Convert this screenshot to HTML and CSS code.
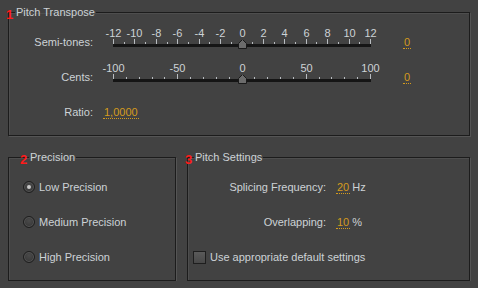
FILE: index.html
```html
<!DOCTYPE html>
<html>
<head>
    <title>Pitch Shifter</title>
    <link rel="stylesheet" href="styles.css">
    <script>
    window.onload = function() {
        var ns = "http://www.w3.org/2000/svg";
        var sliders = document.querySelectorAll(".slider");
        sliders.forEach(function(svg) {
            var min = Number(svg.dataset.min);
            var max = Number(svg.dataset.max);
            var step = Number(svg.dataset.step);
            var every = Number(svg.dataset.label);
            var value = Number(svg.dataset.value);
            var left = 13, len = 257;
            var count = (max - min) / step;

            var track = document.createElementNS(ns, "rect");
            track.setAttribute("x", left);
            track.setAttribute("y", 16);
            track.setAttribute("width", len + 1);
            track.setAttribute("height", 3);
            track.setAttribute("class", "track");
            svg.appendChild(track);

            for (var i = 0; i <= count; i++) {
                var x = Math.round(left + i * len / count);
                var major = i % every == 0;
                var tick = document.createElementNS(ns, "rect");
                tick.setAttribute("x", x);
                tick.setAttribute("y", major ? 11 : 14);
                tick.setAttribute("width", 1);
                tick.setAttribute("height", major ? 5 : 2);
                tick.setAttribute("class", "tick");
                svg.appendChild(tick);
                if (major) {
                    var t = document.createElementNS(ns, "text");
                    t.setAttribute("x", x + 0.5);
                    t.setAttribute("y", 9);
                    t.setAttribute("class", "tick-label");
                    t.textContent = min + i * step;
                    svg.appendChild(t);
                }
            }

            // thumb, pointing up
            var cx = Math.round(left + (value - min) / (max - min) * len) + 0.5;
            var thumb = document.createElementNS(ns, "polygon");
            thumb.setAttribute("points",
                (cx - 4) + ",20.5 " + (cx - 4) + ",15.5 " + cx + ",11.5 " +
                (cx + 4) + ",15.5 " + (cx + 4) + ",20.5");
            thumb.setAttribute("class", "thumb");
            svg.appendChild(thumb);
        });
    };
    </script>
</head>
<body>
<div class="panel">
    <fieldset class="group transpose">
        <legend><span class="num">1</span>Pitch Transpose</legend>
        <div class="slider-row">
            <span class="row-label">Semi-tones:</span>
            <svg class="slider" width="280" height="24" data-min="-12" data-max="12" data-step="1" data-label="2" data-value="0"></svg>
            <span class="value slider-value">0</span>
        </div>
        <div class="slider-row">
            <span class="row-label">Cents:</span>
            <svg class="slider" width="280" height="24" data-min="-100" data-max="100" data-step="10" data-label="5" data-value="0"></svg>
            <span class="value slider-value">0</span>
        </div>
        <div class="ratio-row">
            <span class="row-label">Ratio:</span>
            <span class="value ratio-value">1,0000</span>
        </div>
    </fieldset>

    <div class="bottom">
        <fieldset class="group precision">
            <legend><span class="num">2</span>Precision</legend>
            <div class="radio-row"><span class="radio checked"></span>Low Precision</div>
            <div class="radio-row"><span class="radio"></span>Medium Precision</div>
            <div class="radio-row"><span class="radio"></span>High Precision</div>
        </fieldset>

        <fieldset class="group settings">
            <legend><span class="num">3</span>Pitch Settings</legend>
            <div class="field-row">
                <span class="field-label">Splicing Frequency:</span>
                <span class="value">20</span>
                <span class="unit">Hz</span>
            </div>
            <div class="field-row">
                <span class="field-label">Overlapping:</span>
                <span class="value">10</span>
                <span class="unit">%</span>
            </div>
            <div class="check-row"><span class="checkbox"></span>Use appropriate default settings</div>
        </fieldset>
    </div>
</div>
</body>
</html>
```

FILE: styles.css
```css
body {
    margin: 0;
    background: #424242;
    font-family: "Liberation Sans", Arial, sans-serif;
    font-size: 11px;
    color: #cdd2d6;
}
.panel {
    padding: 5px 0 0 8px;
    width: 462px;
}
.group {
    margin: 0;
    padding: 0;
    border: 1px solid #1c1c1c;
    box-shadow: inset 1px 1px 0 #4e4e4e, 1px 1px 0 #555;
    min-width: 0;
}
legend {
    position: relative;
    margin-left: 6px;
    padding: 0 1px;
    line-height: 14px;
}
.num {
    position: absolute;
    left: -9px;
    top: 3px;
    color: #ff1a1a;
    font-weight: bold;
    font-size: 13px;
    line-height: 13px;
}
.transpose {
    padding: 9px 0 16px;
}
.slider-row {
    display: flex;
    height: 35px;
}
.row-label {
    width: 84px;
    text-align: right;
    line-height: 14px;
    padding-top: 7px;
}
.slider {
    display: block;
    margin-left: 7px;
}
.track {
    fill: #151515;
}
.tick {
    fill: #b8bcc0;
}
.tick-label {
    fill: #cdd2d6;
    font-family: "Liberation Sans", Arial, sans-serif;
    font-size: 11px;
    text-anchor: middle;
}
.thumb {
    fill: #6c6c6c;
    stroke: #1a1a1a;
    stroke-width: 1;
}
.value {
    color: #d49b1d;
    line-height: 12px;
    height: 12px;
    padding: 0 1px;
    border-bottom: 1px dotted #d49b1d;
}
.slider-value {
    margin-left: 23px;
    margin-top: 8px;
}
.ratio-row {
    display: flex;
    align-items: flex-start;
}
.ratio-value {
    margin-left: 10px;
    margin-top: 8px;
}
.bottom {
    display: flex;
    gap: 11px;
    margin-top: 14px;
}
.precision {
    width: 168px;
    box-sizing: border-box;
    padding: 16px 0 16px 14px;
}
.radio-row {
    display: flex;
    align-items: center;
    height: 14px;
    margin-bottom: 21px;
}
.radio-row:last-child {
    margin-bottom: 0;
}
.radio {
    width: 10px;
    height: 10px;
    border-radius: 50%;
    border: 1px solid #1e1e1e;
    background: radial-gradient(circle at 50% 35%, #4a4a4a, #333);
    box-shadow: inset 0 0 0 1px #555;
    margin-right: 4px;
    position: relative;
}
.radio.checked::after {
    content: "";
    position: absolute;
    left: 3px;
    top: 3px;
    width: 4px;
    height: 4px;
    border-radius: 50%;
    background: #c8c8c8;
}
.settings {
    width: 283px;
    box-sizing: border-box;
    padding: 16px 0 16px;
}
.field-row {
    display: flex;
    align-items: flex-start;
    height: 14px;
    margin-bottom: 21px;
}
.field-label {
    width: 138px;
    text-align: right;
    line-height: 14px;
    margin-right: 10px;
}
.field-row .value {
    margin-top: 1px;
}
.unit {
    margin-left: 2px;
    line-height: 14px;
}
.check-row {
    display: flex;
    align-items: center;
    height: 14px;
    padding-left: 5px;
}
.checkbox {
    width: 11px;
    height: 11px;
    border: 1px solid #1e1e1e;
    background: linear-gradient(#5a5a5a, #484848);
    margin-right: 4px;
}
```
